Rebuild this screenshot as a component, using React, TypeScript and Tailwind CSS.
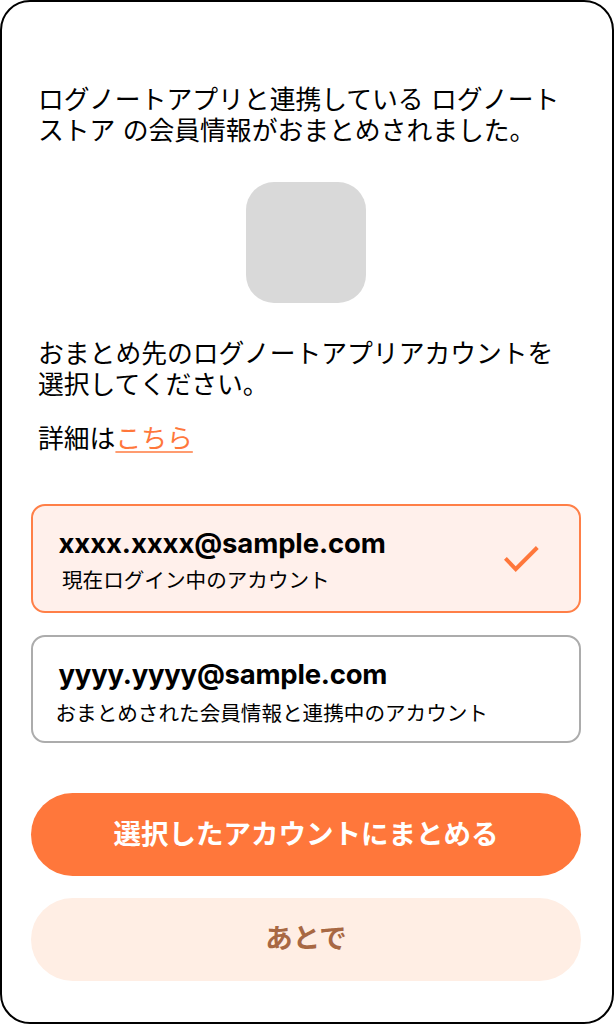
import { useState } from 'react';

interface Account {
  email: string;
  note: string;
  cardClass: string;
  emailClass: string;
  noteClass: string;
}

const accounts: Account[] = [
  {
    email: 'xxxx.xxxx@sample.com',
    note: '現在ログイン中のアカウント',
    cardClass: 'h-[109px]',
    emailClass: 'tracking-[-0.12px]',
    noteClass: 'ml-[3.5px] mt-2',
  },
  {
    email: 'yyyy.yyyy@sample.com',
    note: 'おまとめされた会員情報と連携中のアカウント',
    cardClass: 'h-[108px]',
    emailClass: 'tracking-[-0.24px]',
    noteClass: '-ml-[3px] mt-[10px]',
  },
];

export default function App() {
  const [selected, setSelected] = useState(0);

  return (
    <div className="bg-white">
      <main className="flex h-[1024px] w-[614px] flex-col rounded-[30px] border-2 border-black bg-white px-[29px] font-['Inter','Noto_Sans_CJK_JP',sans-serif] text-black">
        {/* Message */}
        <p className="ml-[7px] mt-[82px] whitespace-nowrap text-[25.8px] leading-[31px]">
          ログノートアプリと連携している ログノート
          <br />
          ストア の会員情報がおまとめされました。
        </p>

        <div className="ml-[215px] mt-[36px] h-[121px] w-[120px] shrink-0 rounded-[28px] bg-[#d9d9d9]" />

        <p className="ml-[7px] mt-[35px] whitespace-nowrap text-[25.8px] leading-[31px]">
          おまとめ先のログノートアプリアカウントを
          <br />
          選択してください。
        </p>
        <p className="ml-[7px] mt-[23px] text-[25.8px] leading-[31px]">
          詳細は
          <a href="#" className="text-[#ff773b] underline decoration-[#ff9c70] decoration-2 underline-offset-3">こちら</a>
        </p>

        {/* Accounts */}
        <div className="mt-[50px] flex flex-col gap-[22px]">
          {accounts.map((account, index) => (
            <button
              key={account.email}
              type="button"
              onClick={() => setSelected(index)}
              className={`flex w-[550px] items-start justify-between rounded-[14px] border-2 pl-[25.5px] pr-[40px] text-left ${account.cardClass} ${
                selected === index
                  ? 'border-[#ff7f47] bg-[#fff0eb]'
                  : 'border-[#acacac] bg-white'
              }`}
            >
              <div className="whitespace-nowrap">
                <p className={`mt-[21px] text-[27.5px] font-bold leading-[33px] ${account.emailClass}`}>{account.email}</p>
                <p className={`text-[20.6px] leading-[25px] ${account.noteClass}`}>{account.note}</p>
              </div>
              {selected === index && (
                <svg className="mt-[40px] h-[26px] w-[35px]" viewBox="0 0 35 26">
                  <path d="M11.7 20.3L2.8 10.9L0 13.8L11.7 25.9L34.7 2.9L31.9 0Z" fill="#ff773b" />
                </svg>
              )}
            </button>
          ))}
        </div>

        {/* Actions */}
        <div className="mt-[50px] flex flex-col gap-[22px]">
          <button type="button" className="h-[83px] w-[550px] rounded-full bg-[#ff773b] text-[27.5px] font-bold text-white">
            選択したアカウントにまとめる
          </button>
          <button type="button" className="h-[83px] w-[550px] rounded-full bg-[#ffeee4] pb-0.5 text-[27.5px] font-bold text-[#a86843]">
            あとで
          </button>
        </div>
      </main>
    </div>
  );
}
